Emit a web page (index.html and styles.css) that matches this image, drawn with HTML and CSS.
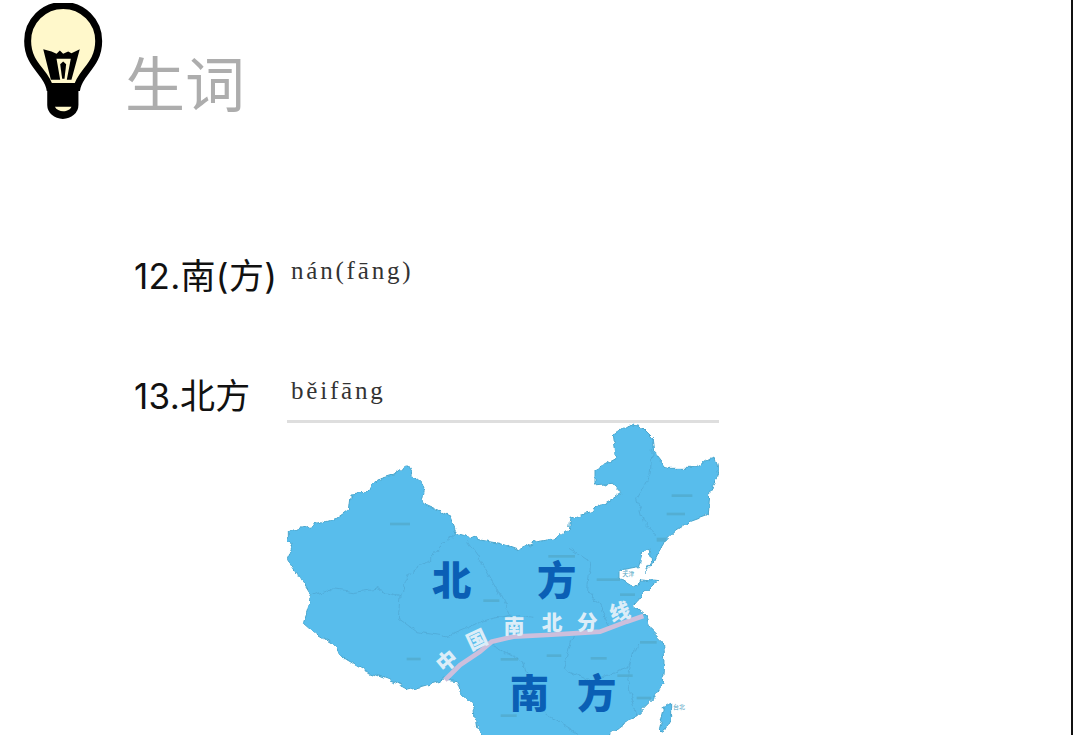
FILE: index.html
```html
<!DOCTYPE html>
<html lang="zh-CN">

<head>
    <meta charset="UTF-8">
    <title>生词</title>
    <link rel="stylesheet" href="styles.css">
</head>

<body>
    <div class="slide">
        <div class="header">
            <svg class="bulb" viewBox="66 8 244 352">
                <path d="M146,262 C136,215 80,195 80,122 A107,107 0 0 1 294,122 C294,195 239,215 229,262 Z" fill="#fff8cb" stroke="#000" stroke-width="21" />
                <path d="M139,249 H233 V315 A47,42 0 0 1 139,315 Z" fill="#000" />
                <path d="M162,320 H212 C205,338 170,338 162,320 Z" fill="#fff8cb" />
                <path d="M127,147 L152,154 167,161 177,151 187,161 202,154 212,159 237,147 L212,239 H198 L210,176 H167 L178,239 H150 Z" fill="#000" />
                <path d="M178,192 L187,184 196,192 L191,236 H184 Z" fill="#000" />
            </svg>
            <h1 class="title">生词</h1>
        </div>

        <div class="words">
            <div class="term">12.南(方)</div>
            <div class="pinyin">nán(fāng)</div>
            <div class="term term2">13.北方</div>
            <div class="pinyin pinyin2">běifāng</div>
            <div class="map">
                <svg viewBox="21 15 1296 945" width="432" height="315">
                    <defs>
                        <filter id="rough" x="-5%" y="-5%" width="110%" height="110%">
                            <feTurbulence type="fractalNoise" baseFrequency="0.035" numOctaves="3" seed="4" />
                            <feDisplacementMap in="SourceGraphic" scale="22" xChannelSelector="R" yChannelSelector="G" />
                            <feGaussianBlur stdDeviation="1.2" />
                        </filter>
                    </defs>
                    <g filter="url(#rough)">
                        <!-- mainland -->
                        <path class="land" d="M22,350 L60,340 120,325 170,310 205,285 210,240 255,235 290,195 340,180 380,150 400,185 435,215 425,265 470,285 510,305 530,355 600,375 660,385 715,405 770,380 830,370 865,345 870,310 930,290 1000,250 1025,232 1000,205 945,210 945,165 1010,130 1000,60 1050,28 1085,35 1120,70 1125,115 1160,160 1240,160 1305,120 1317,180 1290,225 1285,300 1230,320 1190,345 1155,380 1130,420 1118,445 1095,470 1115,440 1110,400 1085,420 1075,455 1020,465 1020,490 1060,515 1090,495 1135,500 1090,535 1060,570 1095,600 1110,640 1150,680 1155,740 1150,800 1120,850 1070,900 1020,935 960,985 630,985 590,935 580,870 540,830 530,800 490,795 440,810 385,825 340,800 260,770 200,735 160,690 110,660 70,625 95,545 60,490 22,430 40,385 22,380 Z" />
                        <path class="land" d="M1150,880 L1175,865 1175,910 1150,955 1135,940 Z" />
                        <!-- province borders -->
                        <path class="border" d="M100,540 L150,520 220,530 290,520 360,545 385,480 450,430 480,395 530,355" />
                        <path class="border" d="M360,545 L355,610 410,650 500,665 560,640 600,620 690,600 760,610" />
                        <path class="border" d="M560,375 L610,450 650,520 690,600 720,660" />
                        <path class="border" d="M870,400 L930,440 920,520 960,570 990,640" />
                        <path class="border" d="M1120,70 L1110,180 1070,250 1090,320 1130,360" />
                        <path class="border" d="M640,690 L730,740 760,850 800,900 900,960" />
                        <path class="border" d="M880,660 L850,760 930,800 1040,760 1070,690" />
                        <path class="border" d="M1060,700 L1040,790 1070,900" />
                    </g>
                    <!-- city marks -->
                    <g class="marks">
                        <rect x="330" y="323" width="60" height="8" /><rect x="380" y="728" width="42" height="8" />
                        <rect x="610" y="553" width="48" height="8" /><rect x="662" y="729" width="52" height="8" />
                        <rect x="805" y="420" width="80" height="8" /><rect x="950" y="490" width="70" height="8" />
                        <rect x="1175" y="238" width="62" height="8" /><rect x="1160" y="293" width="55" height="8" />
                        <rect x="1130" y="368" width="28" height="12" /><rect x="1020" y="535" width="45" height="8" />
                        <rect x="800" y="718" width="44" height="8" /><rect x="932" y="726" width="48" height="8" />
                        <rect x="1012" y="778" width="46" height="8" /><rect x="1070" y="845" width="44" height="8" />
                        <rect x="662" y="898" width="48" height="8" /><rect x="1080" y="678" width="50" height="8" />
                    </g>
                    <path class="split" d="M495,795 L540,750 600,710 635,680 700,665 800,660 880,655 960,650 1040,620 1090,603" />
                    <text class="big" x="515" y="540">北</text>
                    <text class="big" x="830" y="540">方</text>
                    <text class="big" x="748" y="880">南</text>
                    <text class="big" x="950" y="880">方</text>
                    <text class="small" transform="translate(515 755) rotate(-40)">中</text>
                    <text class="small" transform="translate(600 695) rotate(-25)">国</text>
                    <text class="small" transform="translate(702 657)">南</text>
                    <text class="small" transform="translate(816 645)">北</text>
                    <text class="small" transform="translate(922 645)">分</text>
                    <text class="small" transform="translate(1025 612) rotate(-15)">线</text>
                    <text class="tag" x="1045" y="484">天津</text>
                    <text class="tag" x="1197" y="881">台北</text>
                </svg>
            </div>
        </div>
    </div>
</body>

</html>
```

FILE: styles.css
```css
* {
    padding: 0;
    margin: 0;
    box-sizing: border-box;
}

html,
body {
    height: 100%;
    overflow: hidden;
    background-color: #fff;
}

.slide {
    width: 1073px;
    height: 735px;
    border-right: 2px solid #111;
    overflow: hidden;
}

.header {
    display: flex;
    align-items: flex-start;
    height: 249px;
    padding: 3px 0 0 23px;
}

.bulb {
    width: 81px;
    height: 117px;
}

.title {
    margin: 35px 0 0 21px;
    font-family: "Noto Sans CJK SC", sans-serif;
    font-size: 60px;
    line-height: 86px;
    font-weight: 400;
    color: #adadad;
}

.words {
    display: grid;
    grid-template-columns: 153px 432px;
    grid-template-rows: 120px 51px auto;
    padding-left: 134px;
}

.term {
    padding-top: 2px;
    font-family: Inter, "Noto Sans CJK SC", sans-serif;
    font-size: 35px;
    line-height: 50px;
    font-weight: 400;
    letter-spacing: 0.3px;
    color: #111;
    white-space: nowrap;
}

.pinyin {
    padding: 4px 0 0 4px;
    font-family: "Liberation Serif", serif;
    font-size: 25px;
    line-height: 36px;
    letter-spacing: 2.8px;
    color: #333;
}

.map {
    grid-column: 2;
    border-top: 3px solid #dedede;
}

.map svg {
    display: block;
    margin-top: -3px;
}

.land {
    fill: #58bdec;
    stroke: #4ba6cc;
    stroke-width: 3;
}

.border {
    fill: none;
    stroke: #4fa9d6;
    stroke-width: 2.5;
}

.marks {
    fill: #4fa3bf;
    opacity: 0.55;
}

.split {
    fill: none;
    stroke: #cdbfdc;
    stroke-width: 14;
}

.big {
    font-family: "Noto Sans CJK SC", sans-serif;
    font-size: 118px;
    font-weight: 900;
    text-anchor: middle;
    fill: #0a5fb5;
}

.small {
    font-family: "Noto Sans CJK SC", sans-serif;
    font-size: 62px;
    font-weight: 900;
    text-anchor: middle;
    fill: #dcedf8;
}

.tag {
    font-family: "Noto Sans CJK SC", sans-serif;
    font-size: 18px;
    text-anchor: middle;
    fill: #4fa3bf;
}
```
